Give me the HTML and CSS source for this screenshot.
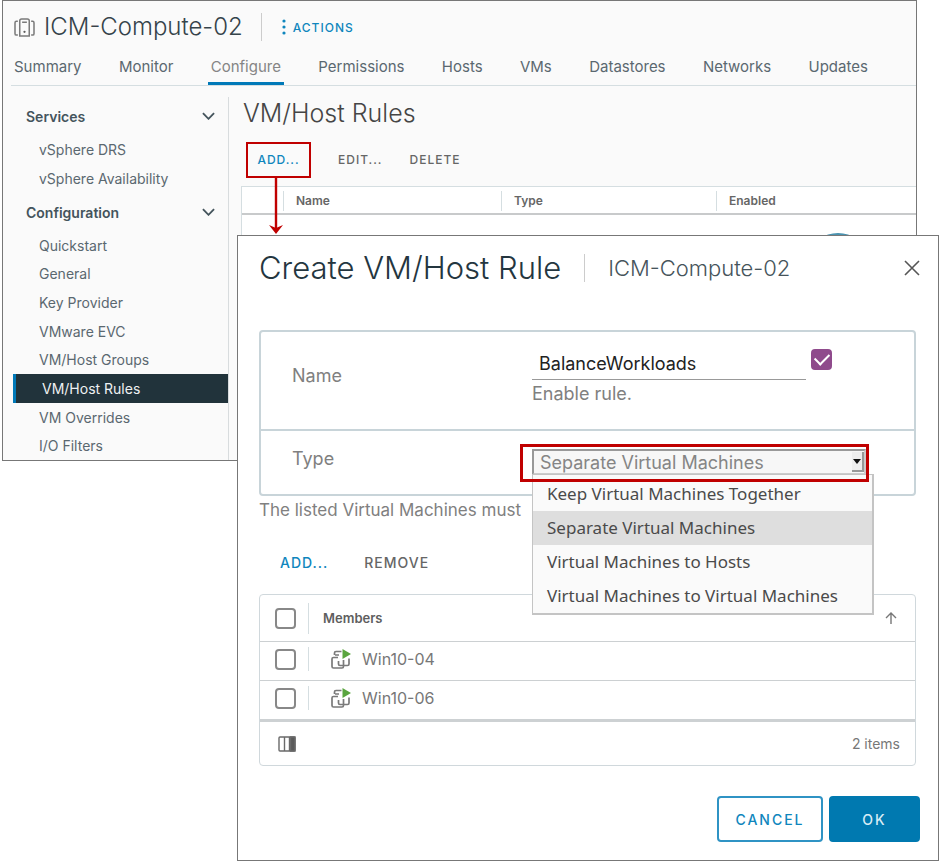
FILE: index.html
```html
<!DOCTYPE html>
<html lang="en">
<head>
<meta charset="utf-8">
<title>ICM-Compute-02 - VM/Host Rules</title>
<link rel="stylesheet" href="styles.css">
</head>
<body>
<div class="stage">
  <div class="window">
    <header class="object-header">
      <svg class="cluster-icon" viewBox="0 0 22 20" fill="none" stroke="#7a7a7a" stroke-width="1.600" aria-hidden="true">
        <path d="M8 1h6q2 0 2 2v16H6V3q0-2 2-2zM8.500 4.500h5M4 3.500H2.500Q1 3.500 1 5v11.500q0 1.500 1.500 1.500H4M18 3.500h1.500Q21 3.500 21 5v11.500q0 1.500-1.500 1.500H18"/>
        <circle cx="11" cy="14.500" r="1.200" fill="#5a5a5a" stroke="none"/>
      </svg>
      <h1>ICM-Compute-02</h1>
      <button class="actions" type="button">
        <svg viewBox="0 0 4 18" fill="#0f86bd" aria-hidden="true"><circle cx="2" cy="3" r="1.600"/><circle cx="2" cy="9" r="1.600"/><circle cx="2" cy="15" r="1.600"/></svg>
        ACTIONS
      </button>
    </header>
    <nav class="tabs">
      <a href="#">Summary</a>
      <a href="#">Monitor</a>
      <a href="#" class="active">Configure</a>
      <a href="#">Permissions</a>
      <a href="#">Hosts</a>
      <a href="#">VMs</a>
      <a href="#">Datastores</a>
      <a href="#">Networks</a>
      <a href="#">Updates</a>
    </nav>
    <div class="body">
      <nav class="sidebar">
        <button class="group" type="button">Services
          <svg viewBox="0 0 14 8" fill="none" stroke="#44545c" stroke-width="2" aria-hidden="true"><path d="M1 1l6 6 6-6"/></svg>
        </button>
        <ul>
          <li><a href="#">vSphere DRS</a></li>
          <li><a href="#">vSphere Availability</a></li>
        </ul>
        <button class="group" type="button">Configuration
          <svg viewBox="0 0 14 8" fill="none" stroke="#44545c" stroke-width="2" aria-hidden="true"><path d="M1 1l6 6 6-6"/></svg>
        </button>
        <ul class="long">
          <li><a href="#">Quickstart</a></li>
          <li><a href="#">General</a></li>
          <li><a href="#">Key Provider</a></li>
          <li><a href="#">VMware EVC</a></li>
          <li><a href="#">VM/Host Groups</a></li>
          <li><a href="#" class="current">VM/Host Rules</a></li>
          <li><a href="#">VM Overrides</a></li>
          <li><a href="#">I/O Filters</a></li>
        </ul>
      </nav>
      <main class="content">
        <h2>VM/Host Rules</h2>
        <div class="toolbar">
          <div class="callout">
            <button class="link primary" type="button">ADD...</button>
            <svg class="arrow" viewBox="0 0 14 58" aria-hidden="true"><path d="M7 0v54" stroke="#c00000" stroke-width="2.400"/><path d="M0 48l7 3 7-3-7 9z" fill="#c00000"/></svg>
          </div>
          <button class="link" type="button">EDIT...</button>
          <button class="link" type="button">DELETE</button>
        </div>
        <table class="rules">
          <colgroup><col class="c-pick"><col class="c-name"><col class="c-type"><col></colgroup>
          <thead><tr><td></td><th scope="col">Name</th><th scope="col">Type</th><th scope="col">Enabled</th></tr></thead>
          <tbody><tr><td></td><td></td><td></td><td><span class="status"></span></td></tr></tbody>
        </table>
      </main>
    </div>
  </div>

  <section class="dialog" role="dialog" aria-labelledby="dialog-title">
    <header class="dialog-header">
      <h2 id="dialog-title">Create VM/Host Rule</h2>
      <span class="subject">ICM-Compute-02</span>
      <button class="close" type="button" aria-label="Close">
        <svg viewBox="0 0 16 16" fill="none" stroke="#565656" stroke-width="1.600"><path d="M1 1l14 14M15 1L1 15"/></svg>
      </button>
    </header>
    <form class="form">
      <div class="row name-row">
        <label class="caption" for="rule-name">Name</label>
        <div class="name-field">
          <input id="rule-name" class="text" type="text" value="BalanceWorkloads">
          <input id="enable" class="check" type="checkbox" checked>
          <label class="helper" for="enable">Enable rule.</label>
        </div>
      </div>
      <div class="row type-row">
        <label class="caption" for="rule-type">Type</label>
        <div class="type-field">
          <select id="rule-type">
            <option>Keep Virtual Machines Together</option>
            <option selected>Separate Virtual Machines</option>
            <option>Virtual Machines to Hosts</option>
            <option>Virtual Machines to Virtual Machines</option>
          </select>
          <span class="drop"><svg viewBox="0 0 8 5" aria-hidden="true"><path d="M0 0h8L4 5z" fill="#111"/></svg></span>
          <ul class="menu">
            <li>Keep Virtual Machines Together</li>
            <li class="on">Separate Virtual Machines</li>
            <li>Virtual Machines to Hosts</li>
            <li>Virtual Machines to Virtual Machines</li>
          </ul>
          <span class="marker"></span>
        </div>
      </div>
    </form>
    <p class="hint">The listed Virtual Machines must</p>
    <div class="member-tools">
      <button class="link primary" type="button">ADD...</button>
      <button class="link" type="button">REMOVE</button>
    </div>
    <div class="grid">
      <table class="members">
        <colgroup><col class="c-check"><col></colgroup>
        <thead>
          <tr>
            <td><input class="check" type="checkbox" aria-label="Select all"></td>
            <th scope="col"><div class="cell">Members
              <svg class="sort" viewBox="0 0 12 12" fill="none" stroke="#777" stroke-width="1.400" aria-hidden="true"><path d="M6 12V1M1 6l5-5 5 5"/></svg></div></th>
          </tr>
        </thead>
        <tbody>
          <tr>
            <td><input class="check" type="checkbox" aria-label="Win10-04"></td>
            <td><div class="cell"><svg class="vm" viewBox="0 0 20 20" fill="none" stroke="#7a7a7a" stroke-width="1.700" aria-hidden="true"><path d="M3.500 6V4q0-1.500 1.500-1.500h5.500M7 8.500H2.500Q1 8.500 1 10v7.500Q1 19 2.500 19H11q1.500 0 1.500-1.500V11M7.500 12v3q0 1.500 1.500 1.500h7.500q1.500 0 1.500-1.500V9.500M4 6h4"/><path d="M11.500 0l8.500 5-8.500 5z" fill="#5aa53f" stroke="none"/></svg>Win10-04</div></td>
          </tr>
          <tr>
            <td><input class="check" type="checkbox" aria-label="Win10-06"></td>
            <td><div class="cell"><svg class="vm" viewBox="0 0 20 20" fill="none" stroke="#7a7a7a" stroke-width="1.700" aria-hidden="true"><path d="M3.500 6V4q0-1.500 1.500-1.500h5.500M7 8.500H2.500Q1 8.500 1 10v7.500Q1 19 2.500 19H11q1.500 0 1.500-1.500V11M7.500 12v3q0 1.500 1.500 1.500h7.500q1.500 0 1.500-1.500V9.500M4 6h4"/><path d="M11.500 0l8.500 5-8.500 5z" fill="#5aa53f" stroke="none"/></svg>Win10-06</div></td>
          </tr>
        </tbody>
      </table>
      <div class="grid-footer">
        <button class="columns" type="button" aria-label="Choose columns">
          <svg viewBox="0 0 18 16" fill="none" stroke="#6a6a6a" stroke-width="1.400"><rect x="1" y="1" width="16" height="14" rx="1"/><path d="M6.500 1v14M11.500 1v14"/><path d="M12.500 1H17v14h-4.500z" fill="#5a5a5a"/></svg>
        </button>
        <span>2 items</span>
      </div>
    </div>
    <footer class="dialog-footer">
      <button class="btn" type="button">CANCEL</button>
      <button class="btn solid" type="button">OK</button>
    </footer>
  </section>
</div>
</body>
</html>
```
FILE: styles.css
```css
* { box-sizing: border-box; }

body {
  margin: 0;
  background: #fff;
  color: #666;
  font-family: Inter, "Noto Sans", sans-serif;
  font-size: 16px;
}

h1, h2, p, ul { margin: 0; padding: 0; font-weight: 400; }
ul { list-style: none; }
a { color: inherit; text-decoration: none; }
button, input, select { font: inherit; color: inherit; }
button { padding: 0; border: 0; background: none; cursor: pointer; white-space: nowrap; }
svg { display: block; flex: none; }
table { border-collapse: separate; border-spacing: 0; table-layout: fixed; width: 100%; }
th, td { padding: 0; text-align: left; }

/* The dialog shares the grid cell of the window and lies over it */
.stage { display: grid; }
.stage > * { grid-area: 1 / 1; }

.window {
  align-self: start;
  margin: 0 23px 0 2px;
  border: 1px solid #777;
  background: #fafafa;
}

.object-header { display: flex; align-items: center; height: 52px; padding-left: 11px; }
.cluster-icon { width: 21px; height: 19px; margin-right: 9px; }
.object-header h1 { font-size: 24px; font-weight: 300; line-height: 30px; color: #35434a; }
.actions {
  display: flex;
  align-items: center;
  gap: 7px;
  height: 28px;
  margin-left: 18px;
  padding-left: 20px;
  border-left: 1px solid #ccc;
  color: #0f86bd;
  font-size: 12px;
  font-weight: 500;
  letter-spacing: 1px;
}
.actions svg { width: 4px; height: 18px; }

.tabs {
  display: flex;
  justify-content: space-between;
  margin-left: 8px;
  padding-right: 45px;
  border-bottom: 1px solid #d5dee1;
  font-size: 15px;
  line-height: 28px;
  color: #5a6870;
}
.tabs a { padding: 0 3px 4px; }
.tabs .active { border-bottom: 3px solid #0079b8; color: #858585; padding-bottom: 1px; }

.body { display: flex; padding-top: 11px; }
.sidebar { flex: none; width: 226px; padding-left: 10px; border-right: 1px solid #d8dcde; font-size: 14px; }
.group {
  display: flex;
  align-items: center;
  justify-content: space-between;
  width: 100%;
  height: 38px;
  padding: 0 13px;
  font-weight: 600;
  color: #44545c;
}
.group svg { width: 13px; height: 8px; }
.sidebar ul { display: grid; grid-auto-rows: 1fr; min-height: 58px; }
.sidebar .long { min-height: 229px; }
.sidebar li { display: grid; }
.sidebar a { display: flex; align-items: center; padding-left: 26px; color: #5a6870; }
.sidebar .current { border-left: 3px solid #0079b8; background: #21333b; color: #eef1f2; }

.content { flex: 1; min-width: 0; padding-left: 12px; }
.content h2 { padding-left: 2px; font-size: 25px; font-weight: 300; line-height: 32px; color: #454545; }
.toolbar { display: flex; align-items: center; gap: 27px; padding: 13px 0 8px 5px; }
.link { font-size: 12px; font-weight: 500; letter-spacing: 1px; line-height: 20px; }
.primary { color: #0f86bd; }
.callout {
  position: relative;
  display: grid;
  place-items: center;
  width: 65px;
  height: 36px;
  border: 2px solid #c00000;
}
.arrow { position: absolute; top: 33px; left: 21px; width: 14px; height: 58px; }

.rules { border: 1px solid #d5dee1; border-width: 1px 0 0 1px; background: #fff; font-size: 12px; }
.c-pick { width: 41px; }
.c-name { width: 218px; }
.c-type { width: 215px; }
.rules thead tr > * { height: 28px; border-bottom: 2px solid #c8cacb; font-weight: 600; }
.rules th { padding-left: 13px; background: linear-gradient(#d5dee1, #d5dee1) 0 4px / 1px 20px no-repeat; }
.rules tbody td { height: 60px; padding: 18px 0 0 96px; vertical-align: top; }
.status { display: block; width: 52px; height: 40px; border-radius: 50%; background: #4a93b0; }

.dialog {
  position: relative;
  margin: 235px 1px 1px 237px;
  border: 1px solid #777;
  background: #fff;
  padding: 0 22px 0 21px;
}
.dialog-header { display: flex; align-items: center; height: 94px; padding-bottom: 30px; color: #24363f; }
.dialog-header h2 { font-size: 31px; font-weight: 300; line-height: 40px; white-space: nowrap; }
.subject {
  margin-left: 23px;
  padding-left: 23px;
  border-left: 1px solid #ccc;
  font-size: 22px;
  font-weight: 300;
  line-height: 28px;
  color: #46545b;
  white-space: nowrap;
}
.close { margin-left: auto; margin-right: -4px; }
.close svg { width: 16px; height: 16px; }

.form { border: 2px solid #c8d4d9; border-radius: 4px; font-size: 18px; color: #808080; }
.row { display: grid; grid-template-columns: 240px 1fr; padding-left: 31px; }
.name-row { min-height: 99px; padding-top: 16px; border-bottom: 2px solid #c8d4d9; }
.name-row .caption { line-height: 56px; }
.name-field {
  display: grid;
  grid-template-columns: 274px 22px;
  grid-template-rows: 32px 28px;
  column-gap: 5px;
}
.text {
  width: 100%;
  padding: 0 7px;
  border: 0;
  border-bottom: 1px solid #999;
  background: none;
  color: #222;
  outline: 0;
}
.helper { line-height: 28px; }
.check {
  appearance: none;
  display: grid;
  place-items: center;
  width: 21px;
  height: 21px;
  margin: 0;
  border: 2px solid #888;
  border-radius: 4px;
  background: #fff;
}
.check:checked { margin-top: 1px; border-color: #8f4a8c; background: #8f4a8c; }
.check:checked::after {
  content: "";
  width: 12px;
  height: 7px;
  margin-bottom: 4px;
  border: solid #fff;
  border-width: 0 0 2px 2px;
  transform: rotate(-45deg);
}

.type-row { min-height: 63px; padding-top: 18px; }
.type-row .caption { line-height: 20px; }
.type-field { position: relative; width: 334px; height: 26px; }
.type-field select {
  appearance: none;
  display: block;
  width: 100%;
  height: 26px;
  padding: 0 6px;
  border: 2px solid #999;
  border-right-color: #ccc;
  border-bottom-color: #ccc;
  border-radius: 0;
  background: #f7f7f7;
  color: #858585;
}
.drop {
  position: absolute;
  top: 3px;
  right: 2px;
  display: grid;
  place-items: center;
  width: 12px;
  height: 20px;
  border: solid #999;
  border-width: 0 2px 2px 0;
  background: #eee;
  pointer-events: none;
}
.drop svg { width: 8px; height: 5px; }
.menu {
  position: absolute;
  z-index: 1;
  top: 25px;
  left: 0;
  width: 342px;
  padding-top: 2px;
  border: 2px solid #c4c4c4;
  border-width: 1px 2px 2px 1px;
  background: #fafafa;
  color: #4a4a4a;
  font-family: "Noto Sans", sans-serif;
  font-size: 17px;
  line-height: 34px;
  white-space: nowrap;
}
.menu li { padding-left: 14px; }
.menu .on { background: #dedede; }
.marker {
  position: absolute;
  z-index: 2;
  inset: -5px -3px -7px -12px;
  border: 3px solid #c00000;
  pointer-events: none;
}

.hint { font-size: 17px; line-height: 28px; color: #808080; }
.member-tools { display: flex; gap: 36px; padding: 29px 21px 21px; }
.member-tools .link { font-size: 14px; }

.grid { border: 1px solid #d0d8dc; border-radius: 4px; color: #777; }
.c-check { width: 48px; }
.members td:first-child { padding-left: 15px; }
.members thead tr > * { height: 47px; border-bottom: 1px solid #ccd0d2; font-weight: 600; font-size: 13px; color: #5e5e5e; }
.members tbody tr > * { height: 39px; padding-bottom: 4px; border-bottom: 1px solid #ccd0d2; }
.members tbody tr:last-child > * { height: 41px; border-bottom: 3px solid #cdd1d3; }
.cell { display: flex; align-items: center; height: 24px; padding-left: 22px; border-left: 1px solid #d5dee1; }
th .cell { height: 31px; padding-left: 14px; }
.sort { width: 12px; height: 12px; margin-left: auto; margin-right: 18px; }
.vm { width: 20px; height: 20px; margin-right: 11px; }
.grid-footer {
  display: flex;
  align-items: center;
  justify-content: space-between;
  height: 43px;
  padding: 0 15px 0 18px;
  font-size: 14px;
}
.columns svg { width: 18px; height: 16px; }

.dialog-footer { display: flex; justify-content: flex-end; gap: 6px; margin-right: -4px; padding: 30px 0 18px; }
.btn {
  width: 106px;
  height: 46px;
  border: 2px solid #2f93c4;
  border-radius: 4px;
  color: #0f86bd;
  font-size: 14px;
  font-weight: 500;
  letter-spacing: 2px;
}
.solid { width: 91px; border-color: #0079b0; background: #0079b0; color: #d8ecf5; }
```
